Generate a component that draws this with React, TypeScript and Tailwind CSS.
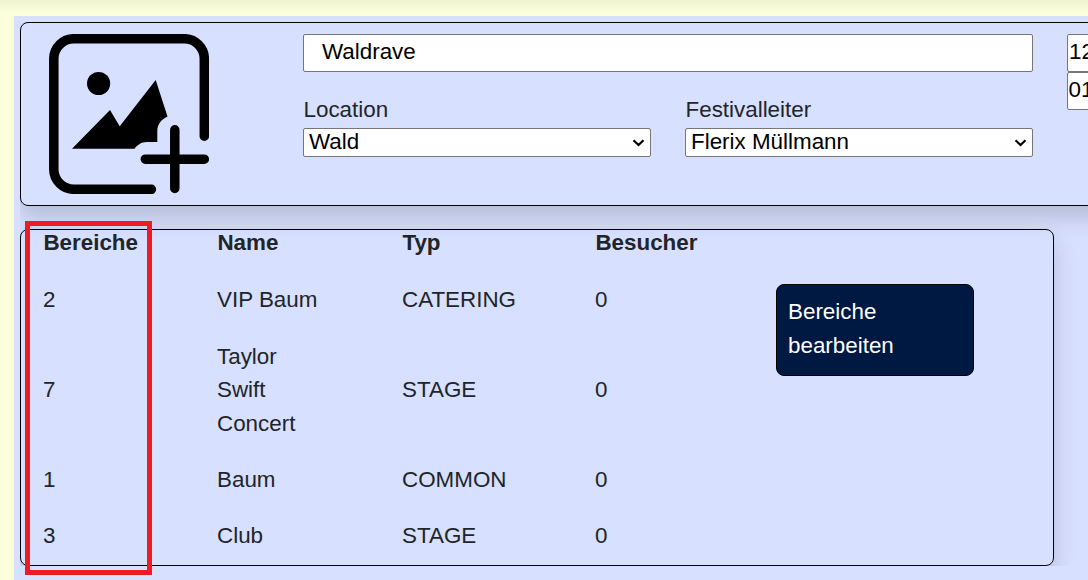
import React from "react";

type Area = { id: number; name: string; type: string; visitors: number };

const areas: Area[] = [
  { id: 2, name: "VIP Baum", type: "CATERING", visitors: 0 },
  { id: 7, name: "Taylor Swift Concert", type: "STAGE", visitors: 0 },
  { id: 1, name: "Baum", type: "COMMON", visitors: 0 },
  { id: 3, name: "Club", type: "STAGE", visitors: 0 },
];

function AddImageIcon() {
  return (
    <svg width="160" height="160" viewBox="49 34 160 160" className="block shrink-0" aria-hidden="true">
      <g fill="none" stroke="#000" strokeWidth="9.5" strokeLinecap="round">
        <path d="M204.3 136.2V58.7a20 20 0 0 0-20-20H73.8a20 20 0 0 0-20 20v110.6a20 20 0 0 0 20 20h77.6" />
        <path d="M174.8 129.8v58.7M145.3 159.2h59" />
      </g>
      <circle cx="98.6" cy="83.5" r="11.6" />
      <path d="M72 148.8 110 110l9.7 16.2L155.7 80l11.8 36.5c-6.5 3.200-10.200 8.200-10.200 14.500v11h-10.500c-5.500 0-9.300 2.800-12.300 6.800Z" />
    </svg>
  );
}

function SelectField({ label, value }: { label: string; value: string }) {
  return (
    <label className="block w-[348px]">
      <span className="block h-[35px] pl-[0.5px] leading-[34px]">{label}</span>
      <span className="flex h-[29px] items-center justify-between rounded-[2px] border border-[#767676] bg-white pr-[5px] pl-[5px] leading-[27px] text-black">
        <span className="-mt-[2px]">{value}</span>
        <svg width="13" height="9" viewBox="0 0 13 9" fill="none" stroke="#000" strokeWidth="2.2">
          <path d="M1.500 2.200 6.500 7 11.500 2.200" />
        </svg>
      </span>
    </label>
  );
}

export default function App() {
  return (
    <div className="relative flex h-[580px] w-[1088px] flex-col overflow-hidden bg-[#fbffdb] font-['Liberation_Sans',Arial,sans-serif] text-[22.4px] leading-[33.6px] text-[#212529]">
      <div className="h-4 shrink-0 bg-linear-to-b from-[#eff3d0] to-[#fbffdb] to-80%" />
      <main className="ml-[14px] h-[564px] bg-[#d8e0ff] pt-[6px] pl-[6px]">
        <div className="h-[544px] overflow-hidden">
          <section className="flex h-[184px] w-[1300px] rounded-lg border border-black pt-[11px] pl-[28px] shadow-[0_11.2px_22.4px_rgba(0,0,0,0.16)]">
            <AddImageIcon />
            <div className="ml-[94px] w-[730px]">
              <div className="h-[38px] rounded-[2px] border border-[#767676] bg-white pl-[18px] leading-[34px] text-black">
                Waldrave
              </div>
              <div className="mt-[21px] flex justify-between">
                <SelectField label="Location" value="Wald" />
                <SelectField label="Festivalleiter" value="Flerix Müllmann" />
              </div>
            </div>
            <div className="ml-[34px] w-[180px] leading-[34px] text-black">
              <div className="h-[38px] rounded-[2px] border border-[#767676] bg-white pl-[1px]">12</div>
              <div className="h-[38px] rounded-[2px] border border-[#767676] bg-white pl-[0.5px]">01</div>
            </div>
          </section>

          <section className="mt-[23px] flex h-[337px] w-[1034px] rounded-lg border border-black pl-[22px] shadow-[0_11.2px_22.4px_rgba(0,0,0,0.16)]">
            <div className="w-[733px]">
              <div className="grid h-[53.4px] grid-cols-[174px_185px_193px_181px] pl-[0.4px] leading-[26px] font-bold">
                <span>Bereiche</span>
                <span>Name</span>
                <span>Typ</span>
                <span>Besucher</span>
              </div>
              <div className="flex flex-col gap-[22.6px]">
                {areas.map((area) => (
                  <div key={area.id} className="grid grid-cols-[174px_185px_193px_181px] items-center">
                    <span>{area.id}</span>
                    <span className="pr-[78px]">{area.name}</span>
                    <span>{area.type}</span>
                    <span>{area.visitors}</span>
                  </div>
                ))}
              </div>
            </div>
            <button className="mt-[54px] flex h-[92px] w-[198px] items-start rounded-lg border border-black bg-[#001943] px-[11px] pt-[10px] text-left text-white">
              Bereiche bearbeiten
            </button>
          </section>
        </div>
      </main>
      <div className="pointer-events-none absolute top-[221px] left-[25px] h-[354px] w-[127px] border-5 border-[#ed1c24]" />
    </div>
  );
}
